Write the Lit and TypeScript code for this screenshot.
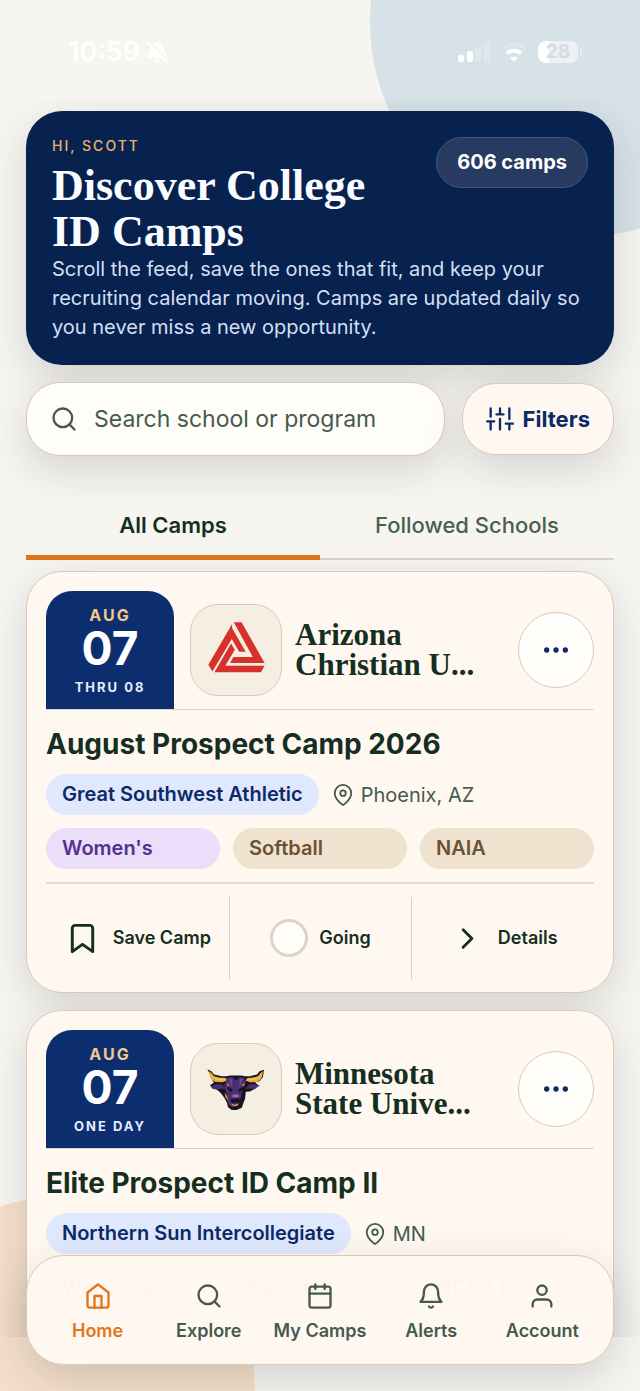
import { LitElement, html, svg, css } from "lit";
import { customElement, property } from "lit/decorators.js";

const paths = {
  search: svg`<circle cx="11" cy="11" r="8"/><path d="M21 21l-4.35-4.35"/>`,
  sliders: svg`<path d="M4 21v-7M4 10V3M12 21v-9M12 8V3M20 21v-5M20 12V3M1 14h6M9 8h6M17 16h6"/>`,
  more: svg`<circle cx="12" cy="12" r="1"/><circle cx="19" cy="12" r="1"/><circle cx="5" cy="12" r="1"/>`,
  pin: svg`<path d="M21 10c0 7-9 13-9 13s-9-6-9-13a9 9 0 0 1 18 0z"/><circle cx="12" cy="10" r="3"/>`,
  bookmark: svg`<path d="M19 21l-7-5-7 5V5a2 2 0 0 1 2-2h10a2 2 0 0 1 2 2z"/>`,
  chevron: svg`<path d="M9 18l6-6-6-6"/>`,
  home: svg`<path d="M3 9l9-7 9 7v11a2 2 0 0 1-2 2H5a2 2 0 0 1-2-2z"/><path d="M9 22V12h6v10"/>`,
  calendar: svg`<rect x="3" y="4" width="18" height="18" rx="2"/><path d="M16 2v4M8 2v4M3 10h18"/>`,
  bell: svg`<path d="M18 8A6 6 0 0 0 6 8c0 7-3 9-3 9h18s-3-2-3-9"/><path d="M13.73 21a2 2 0 0 1-3.46 0"/>`,
  user: svg`<path d="M20 21v-2a4 4 0 0 0-4-4H8a4 4 0 0 0-4 4v2"/><circle cx="12" cy="7" r="4"/>`,
};

type IconName = keyof typeof paths;

const icon = (name: IconName, size: number) => html`<svg
  width=${size} height=${size} viewBox="0 0 24 24" fill="none" stroke="currentColor"
  stroke-width="2" stroke-linecap="round" stroke-linejoin="round" aria-hidden="true"
>${paths[name]}</svg>`;

const logos = {
  triangle: html`<svg width="57" height="56" viewBox="23 29 168 165" aria-hidden="true">
    <g fill="#d8312b">
      <path d="M94 35L24 155l12 20L93 79l22 38h19L94 47z"/>
      <path d="M99 30h23l68 120H88l10-18h57z"/>
      <path d="M42 177l49-85 11 19-28 47h116l-11 19z"/>
    </g>
  </svg>`,
  bull: html`<svg width="58" height="41" viewBox="51 86 175 124" aria-hidden="true">
    <path fill="#17121c" d="M52 87l12 6 8 10 24 5h12l14-2h32l12 2h14l22-5 8-10 13-5-3 22-10 12-14 5 8 6-6 12-18 9-12 1-2 20-6 16-4 12-18 8-14-2-10-8-3-14-8-14-10-14-12-10-14-4-7-10 12-8-6-8-5-14z"/>
    <path fill="#e8b03c" d="M57 92l7 6 8 10 16 4 20 1 4 8-14 5-22-1-12-7-5-11z"/>
    <path fill="#f6d35c" d="M62 101l10 10 16 5 18 0-8 4-18-2-11-6z"/>
    <path fill="#e8b03c" d="M220 92l-7 6-8 10-16 4-16 1-6 8 14 5 20-1 12-7 5-11z"/>
    <path fill="#f6d35c" d="M215 101l-10 10-16 5-16 0 8 4 16-2 11-6z"/>
    <path fill="#4c2d72" d="M62 138l18-7 18 3 10 13-14-2-8 4-14-3zM210 136l-16-5-18 3-8 13 12-2 10 2 12-5z"/>
    <path fill="#4c2d72" d="M112 112h20l6 8 6-8h18l6 12-6 16-6 18-4 22-10 18-14 4-12-8-4-20-4-20-6-16z"/>
    <path fill="#6a469a" d="M118 114l8 2 2 26-8-12zM158 114l-8 2-2 26 8-12z"/>
    <path fill="#17121c" d="M114 140l14 8-2 8-12-8zM160 140l-14 8 2 8 12-8zM120 180l12-5h12l10 5-6 7-22 1zM132 110h12v8h-12z"/>
    <path fill="#d79c45" d="M104 156l8 14 4 14-10-14zM111 127l10 12-8-2zM164 127l-8 11 8-2zM122 190l12 4 14-4-6 8h-12z"/>
    <path fill="#8b6a9c" d="M124 168l8-6h10l8 6-8 4h-10z"/>
  </svg>`,
};

interface Camp {
  day: string;
  span: string;
  logo: keyof typeof logos;
  school: string;
  title: string;
  conference: string;
  place: string;
  tags: string[];
}

const camps: Camp[] = [
  {
    day: "07", span: "THRU 08", logo: "triangle", school: "Arizona Christian U...",
    title: "August Prospect Camp 2026", conference: "Great Southwest Athletic",
    place: "Phoenix, AZ", tags: ["Women's", "Softball", "NAIA"],
  },
  {
    day: "07", span: "ONE DAY", logo: "bull", school: "Minnesota State Unive...",
    title: "Elite Prospect ID Camp II", conference: "Northern Sun Intercollegiate",
    place: "MN", tags: ["Women's", "Soccer", "NCAA D2"],
  },
];

const base = css`
  :host, * { box-sizing: border-box; }
  svg { display: block; flex: none; }
  button, input { font: inherit; color: inherit; margin: 0; }
  button { cursor: pointer; border: 0; background: none; padding: 0; }
  h1, h2, h3, p { margin: 0; }
`;

@customElement("status-bar")
class StatusBar extends LitElement {
  static styles = [base, css`
    :host {
      display: flex; align-items: center; justify-content: space-between;
      height: 99px; padding: 4px 58px 0 68px; color: #fff;
    }
    .side { display: flex; align-items: center; }
    .left { gap: 5px; }
    .right { gap: 11px; }
    .time { font-size: 27px; font-weight: 600; line-height: 32px; }
    .battery { display: flex; align-items: center; gap: 2px; }
    .cell {
      width: 40px; border-radius: 8px; text-align: center;
      font-size: 19px; line-height: 22px; font-weight: 700; color: #d3dbe0;
      background: linear-gradient(90deg, #fff 28%, #edf1f5 28%);
    }
    .cap { width: 2px; height: 8px; border-radius: 0 3px 3px 0; background: #e7edf2; }
  `];
  render() {
    return html`
      <div class="side left">
        <span class="time">10:59</span>
        <svg width="24" height="24" viewBox="0 0 24 24" aria-hidden="true">
          <path fill="currentColor" d="M12 2a7 7 0 0 1 7 7c0 5 3 6 3 9H2c0-3 3-4 3-9a7 7 0 0 1 7-7zM9 19.500h6a3 3 0 0 1-6 0z"/>
          <path stroke="#f7f5f1" stroke-width="4" d="M3 1l20 21"/>
          <path stroke="currentColor" stroke-width="2" stroke-linecap="round" d="M2 2l20 20"/>
        </svg>
      </div>
      <div class="side right">
        <svg width="32" height="20" viewBox="0 0 32 20" fill="currentColor" aria-hidden="true">
          <rect y="13" width="6" height="7" rx="2"/>
          <rect x="9" y="9" width="6" height="11" rx="2"/>
          <rect x="17" y="5" width="6" height="15" rx="2" opacity=".2"/>
          <rect x="26" width="6" height="20" rx="2" opacity=".2"/>
        </svg>
        <svg width="26" height="20" viewBox="0 0 26 20" fill="none" stroke="currentColor" stroke-width="4" aria-hidden="true">
          <path d="M2 7a16 16 0 0 1 22 0" opacity=".2"/>
          <path d="M6 11.500a10 10 0 0 1 14 0"/>
          <path d="M13 20l-4-4a6 6 0 0 1 8 0z" fill="currentColor" stroke="none"/>
        </svg>
        <div class="battery"><span class="cell">28</span><span class="cap"></span></div>
      </div>
    `;
  }
}

@customElement("camp-card")
class CampCard extends LitElement {
  @property({ attribute: false }) camp!: Camp;

  static styles = [base, css`
    :host {
      display: block; padding: 19px 19px 13px; border: 1px solid #d9cab5; border-radius: 36px;
      background: #fff8f0; box-shadow: 0 12px 40px rgba(20, 30, 40, .15);
    }
    .head { display: flex; align-items: center; border-bottom: 1px solid #ddd2c3; }
    .date {
      display: flex; flex-direction: column; align-items: center;
      width: 128px; height: 118px; padding-top: 15px; margin-right: 16px;
      border-radius: 26px 26px 0 0; background: #0d2e6e; color: #fff;
    }
    .month { font-size: 16px; line-height: 19px; font-weight: 700; letter-spacing: 2px; color: #f1c98a; }
    .day { font-size: 46px; line-height: 46px; font-weight: 700; }
    .span { margin-top: 8px; font-size: 13px; line-height: 16px; font-weight: 700; letter-spacing: 2px; color: #e4ebfa; }
    .logo {
      display: grid; place-items: center; flex: none; width: 92px; height: 92px; margin-right: 13px;
      border: 1px solid #d9cab5; border-radius: 28px; background: #f4eee3;
    }
    .school {
      flex: 1; min-width: 0; padding-right: 16px; color: #152e22;
      font: 700 31px/30px Georgia, "Liberation Serif", serif;
    }
    .more {
      display: grid; place-items: center; flex: none; width: 76px; height: 76px;
      border: 1px solid #d9cab5; border-radius: 50%; background: #fffefb; color: #0d2a68;
    }
    .title { margin: 16px 0 12px; font-size: 28px; line-height: 36px; font-weight: 700; color: #152e22; }
    .meta { display: flex; align-items: center; gap: 13px; }
    .chip {
      padding: 0 16px; border-radius: 21px; font-size: 20px; line-height: 41px; font-weight: 600;
      background: #efe2cf; color: #6b5236; white-space: nowrap;
    }
    .conference { background: #dfe8fd; color: #0d2a68; }
    .place { display: flex; align-items: center; gap: 7px; font-size: 20px; line-height: 24px; color: #455a4e; }
    .tags { display: grid; grid-template-columns: repeat(3, 1fr); gap: 13px; margin: 13px 0; }
    .tags .chip:first-child { background: #eadefa; color: #54318f; }
    .actions { display: grid; grid-template-columns: repeat(3, 1fr); padding-top: 13px; border-top: 2px solid #e6dbcc; }
    .action {
      display: flex; align-items: center; justify-content: center; gap: 11px; height: 82px;
      font-size: 18px; line-height: 24px; font-weight: 600; color: #152e22; white-space: nowrap;
    }
    .action + .action { border-left: 1px solid #ddcfbb; }
    .slot { display: grid; place-items: center; width: 38px; height: 38px; flex: none; }
    .ring { border: 3px solid #e0d3c2; border-radius: 50%; background: #fffdf8; }
  `];

  render() {
    const c = this.camp;
    return html`
      <div class="head">
        <div class="date">
          <span class="month">AUG</span>
          <span class="day">${c.day}</span>
          <span class="span">${c.span}</span>
        </div>
        <div class="logo">${logos[c.logo]}</div>
        <h2 class="school">${c.school}</h2>
        <button class="more" aria-label="More options">${icon("more", 32)}</button>
      </div>
      <h3 class="title">${c.title}</h3>
      <div class="meta">
        <span class="chip conference">${c.conference}</span>
        <span class="place">${icon("pin", 22)}${c.place}</span>
      </div>
      <div class="tags">${c.tags.map((t) => html`<span class="chip">${t}</span>`)}</div>
      <div class="actions">
        <button class="action"><span class="slot">${icon("bookmark", 35)}</span>Save Camp</button>
        <button class="action"><span class="slot ring"></span>Going</button>
        <button class="action"><span class="slot">${icon("chevron", 35)}</span>Details</button>
      </div>
    `;
  }
}

@customElement("tab-bar")
class TabBar extends LitElement {
  static styles = [base, css`
    :host {
      display: grid; grid-template-columns: repeat(5, 1fr); padding: 26px 15px 21px;
      border: 1px solid #d9cab5; border-radius: 38px; background: rgba(255, 248, 241, .98);
      box-shadow: 0 14px 40px rgba(20, 30, 40, .16);
    }
    .item {
      display: flex; flex-direction: column; align-items: center; gap: 9px;
      font-size: 18px; line-height: 24px; font-weight: 600; color: #455a4e;
      text-decoration: none; white-space: nowrap;
    }
    .current { color: #e0761b; }
  `];
  render() {
    const items: [IconName, string][] = [
      ["home", "Home"], ["search", "Explore"], ["calendar", "My Camps"], ["bell", "Alerts"], ["user", "Account"],
    ];
    return html`${items.map(([name, label], i) => html`
      <a class="item ${i === 0 ? "current" : ""}" href="#">${icon(name, 28)}${label}</a>`)}`;
  }
}

@customElement("app-root")
class AppRoot extends LitElement {
  static styles = [base, css`
    :host {
      display: flex; flex-direction: column; position: relative; overflow: hidden;
      height: 100vh; padding-bottom: 54px; background: #f7f5f0;
      font-family: Inter, "Liberation Sans", sans-serif;
    }
    .blob { position: absolute; border-radius: 50%; }
    .sky { width: 428px; height: 428px; top: -192px; right: -158px; background: #d7e1e8; }
    .peach { width: 390px; height: 390px; bottom: -196px; left: -135px; background: #f5dfca; }
    status-bar, main { position: relative; }
    main { flex: 1; min-height: 0; overflow: hidden; padding: 12px 26px 0; }
    .hero {
      padding: 26px 26px 23px; border-radius: 36px; background: #07224f; color: #fff;
      box-shadow: 0 14px 40px rgba(20, 30, 40, .16);
    }
    .top { display: flex; align-items: flex-start; justify-content: space-between; gap: 32px; }
    .hello { font-size: 14px; line-height: 18px; font-weight: 500; letter-spacing: 2px; color: #e9b368; }
    h1 { margin-top: 8px; font: 700 44px/46px Georgia, "Liberation Serif", serif; color: #fbfcff; }
    .count {
      flex: none; padding: 0 20px; border: 1px solid #465879; border-radius: 26px; background: #263a62;
      font-size: 20px; line-height: 49px; font-weight: 700;
    }
    .hero p { font-size: 20px; line-height: 29px; color: #d5dff4; }
    .tools { display: flex; align-items: center; gap: 17px; margin-top: 17px; }
    .search, .filters {
      display: flex; align-items: center; border: 1px solid #d9cab5; border-radius: 34px;
      box-shadow: 0 14px 40px rgba(20, 30, 40, .15);
    }
    .search { flex: 1; min-width: 0; height: 74px; gap: 16px; padding: 0 23px; background: #fffdf8; color: #455a4e; }
    .search input { flex: 1; min-width: 0; border: 0; outline: 0; background: none; padding: 0; font-size: 23px; line-height: 32px; }
    .search input::placeholder { color: #455a4e; opacity: 1; }
    .filters { height: 72px; gap: 9px; padding: 0 23px; background: #fff8f0; color: #0d2a68; font-size: 22px; font-weight: 700; }
    .tabs { display: grid; grid-template-columns: 1fr 1fr; margin: 33px 0 11px; border-bottom: 2px solid #ddd3c5; }
    .tab { height: 71px; margin-bottom: -2px; padding-top: 5px; border-bottom: 5px solid transparent; font-size: 22px; font-weight: 500; color: #48614f; }
    .active { border-color: #e0761b; color: #152e22; font-weight: 600; }
    .feed { display: flex; flex-direction: column; gap: 17px; }
    tab-bar { position: absolute; left: 26px; right: 26px; bottom: 26px; }
  `];
  render() {
    return html`
      <div class="blob sky"></div>
      <div class="blob peach"></div>
      <status-bar></status-bar>
      <main>
        <section class="hero">
          <div class="top">
            <div>
              <div class="hello">HI, SCOTT</div>
              <h1>Discover College ID Camps</h1>
            </div>
            <div class="count">606 camps</div>
          </div>
          <p>Scroll the feed, save the ones that fit, and keep your recruiting calendar moving. Camps are updated daily so you never miss a new opportunity.</p>
        </section>
        <div class="tools">
          <label class="search">${icon("search", 28)}<input type="search" aria-label="Search school or program" placeholder="Search school or program" /></label>
          <button class="filters">${icon("sliders", 28)}Filters</button>
        </div>
        <div class="tabs" role="tablist">
          <button class="tab active" role="tab" aria-selected="true">All Camps</button>
          <button class="tab" role="tab" aria-selected="false">Followed Schools</button>
        </div>
        <div class="feed">${camps.map((c) => html`<camp-card .camp=${c}></camp-card>`)}</div>
      </main>
      <tab-bar></tab-bar>
    `;
  }
}
